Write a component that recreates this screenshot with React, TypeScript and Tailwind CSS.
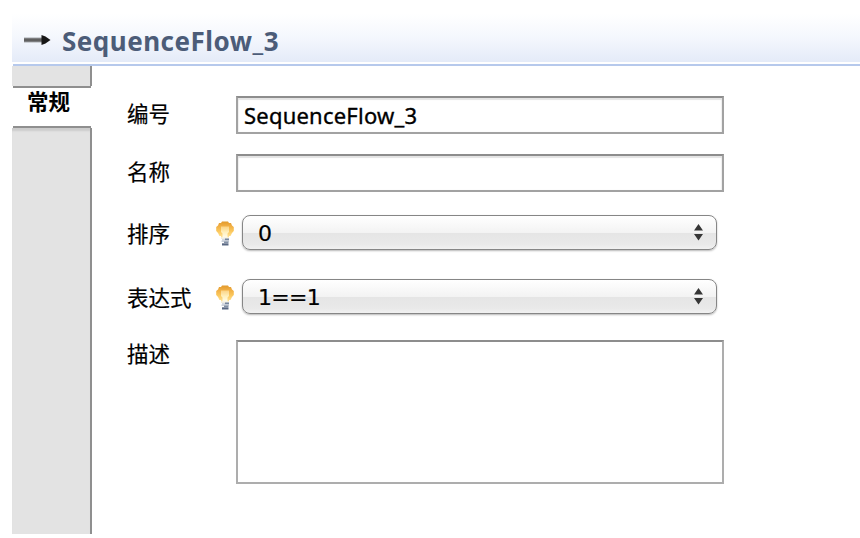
import React from "react";

const latin = "font-['Noto_Sans','Noto_Sans_CJK_SC',sans-serif]";

function Bulb() {
  return (
    <svg width="18" height="26" viewBox="0 0 18 26" className="mt-[3px] block shrink-0" aria-hidden="true">
      <defs>
        <linearGradient id="glass" x1="0" y1="0" x2="0" y2="1">
          <stop offset="0" stopColor="#e29a2c" />
          <stop offset="0.25" stopColor="#efac42" />
          <stop offset="0.6" stopColor="#fbc75c" />
          <stop offset="1" stopColor="#ffe49a" />
        </linearGradient>
        <linearGradient id="core" x1="0" y1="0" x2="0" y2="1">
          <stop offset="0" stopColor="#fbd385" />
          <stop offset="0.5" stopColor="#fff0bd" />
          <stop offset="1" stopColor="#fffdf0" />
        </linearGradient>
      </defs>
      <path d="M6 .5h6L13 2h2l1 2.500 1.800 1.500v4L16 12l-1.500 3H13v1.500H5V15H3.500L2 12 .2 10V6L2 4.500 3 2h2z" fill="url(#glass)" />
      <path d="M5 5.500h8V11l-1.500 1.500V17h-5v-4.500L5 11z" fill="url(#core)" />
      <path d="M5 16.500h8V18H5z" fill="#eeece2" />
      <path d="M6 18h3v2H6z" fill="#d5dae1" />
      <path d="M9 17.500h4V19.500H9z" fill="#7888a0" />
      <path d="M5.500 19.500H13v1.500H5.500z" fill="#cbd1da" />
      <path d="M8 20.500h4.500V22H8z" fill="#8290a5" />
      <path d="M6 22.300h6.500V24.500H6z" fill="#596883" />
    </svg>
  );
}

function Label({ children }: { children: React.ReactNode }) {
  return (
    <div className="w-[89px] shrink-0 whitespace-nowrap font-['Noto_Sans_CJK_SC',sans-serif] text-[21.5px] leading-8 text-black [-webkit-text-stroke:0.2px_black]">
      {children}
    </div>
  );
}

function TextField({ value }: { value: string }) {
  return (
    <div className="ml-[20px] h-[38px] w-[488px] border-2 border-t-[#8d8d8d] border-r-[#a2a2a2] border-b-[#a2a2a2] border-l-[#a2a2a2] bg-white pl-[6px] shadow-[inset_0_2px_1px_#e4e4e4,inset_1px_0_1px_#f0f0f0,inset_-1px_0_1px_#f0f0f0]">
      <span className={`${latin} block text-[22px] leading-[35px] tracking-[0.22px] text-black [-webkit-text-stroke:0.35px_black]`}>{value}</span>
    </div>
  );
}

function SelectField({ value }: { value: string }) {
  return (
    <div className="ml-[8px] flex h-[35px] w-[475px] items-center justify-between rounded-[8px] border-[1.5px] border-[#868686] bg-[linear-gradient(#ffffff,#f3f3f3_50%,#e5e5e5_51%,#e9e9e9_85%,#f1f1f1)] pr-[13px] pl-[15px] shadow-[0_1px_2px_#b8b8b8]">
      <span className="pt-[2px] font-['DejaVu_Sans',sans-serif] text-[22px] leading-[31px] tracking-[-0.7px] text-black [-webkit-text-stroke:0.2px_black]">{value}</span>
      <svg width="9" height="18" viewBox="0 0 9 18" aria-hidden="true">
        <path d="M4.500 1 9 7.500H0zM0 11h9l-4.500 6.500z" fill="#363636" />
      </svg>
    </div>
  );
}

export default function App() {
  return (
    <div className="flex h-[538px] w-[860px] flex-col overflow-hidden bg-white pt-[14px] pl-[12px]">
      <header className="flex h-[48px] shrink-0 items-center bg-[linear-gradient(#ffffff,#f4f7fd_50%,#e4ebf8)] pl-[11px]">
        <svg width="28" height="14" viewBox="0 0 28 14" className="mt-[4px] shrink-0" aria-hidden="true">
          <path d="M1 7h19" stroke="#a5a8ad" strokeWidth="5" />
          <path d="M1 7h19" stroke="#606060" strokeWidth="3.200" />
          <path d="M18.500 2 22.500 3.500 27.500 7 22.500 10.500 18.500 12z" fill="#161616" />
        </svg>
        <h1 className={`${latin} ml-[11px] mt-[5px] text-[26px] leading-9 font-bold tracking-[0.5px] text-[#4c5c78]`}>SequenceFlow_3</h1>
      </header>
      <div className="mt-[2px] ml-px h-[2px] shrink-0 bg-[#b6c9ec]" />
      <div className="flex h-[468px]">
        <aside className="flex w-[80px] shrink-0 flex-col">
          <div className="h-[20px] border-r-2 border-[#8f8f8f] bg-[#e3e3e3]" />
          <div className="mr-px ml-px h-[42px] border-y-2 border-[#8f8f8f] bg-white pl-[14px] font-['Noto_Sans_CJK_SC',sans-serif] text-[21.5px] leading-[26px] font-bold text-black">
            常规
          </div>
          <div className="grow border-r-2 border-[#8f8f8f] bg-[#e3e3e3] shadow-[inset_0_4px_2px_-1px_#cccccc]" />
        </aside>
        <main className="flex flex-col pt-[30px] pl-[35px]">
          <div className="flex h-[38px] items-start"><div className="pt-px"><Label>编号</Label></div><TextField value="SequenceFlow_3" /></div>
          <div className="mt-[20px] flex h-[38px] items-start"><div className="pt-px"><Label>名称</Label></div><TextField value="" /></div>
          <div className="mt-[22px] flex h-[36px] items-center"><div className="pt-[2px]"><Label>排序</Label></div><Bulb /><SelectField value="0" /></div>
          <div className="mt-[28px] flex h-[36px] items-center"><div className="pt-[2px]"><Label>表达式</Label></div><Bulb /><SelectField value="1==1" /></div>
          <div className="mt-[26px] flex">
            <div className="-mt-[3px]"><Label>描述</Label></div>
            <div className="ml-[20px] h-[144px] w-[488px] border-2 border-[#adadad] border-t-[#8d8d8d] bg-white" />
          </div>
        </main>
      </div>
    </div>
  );
}
